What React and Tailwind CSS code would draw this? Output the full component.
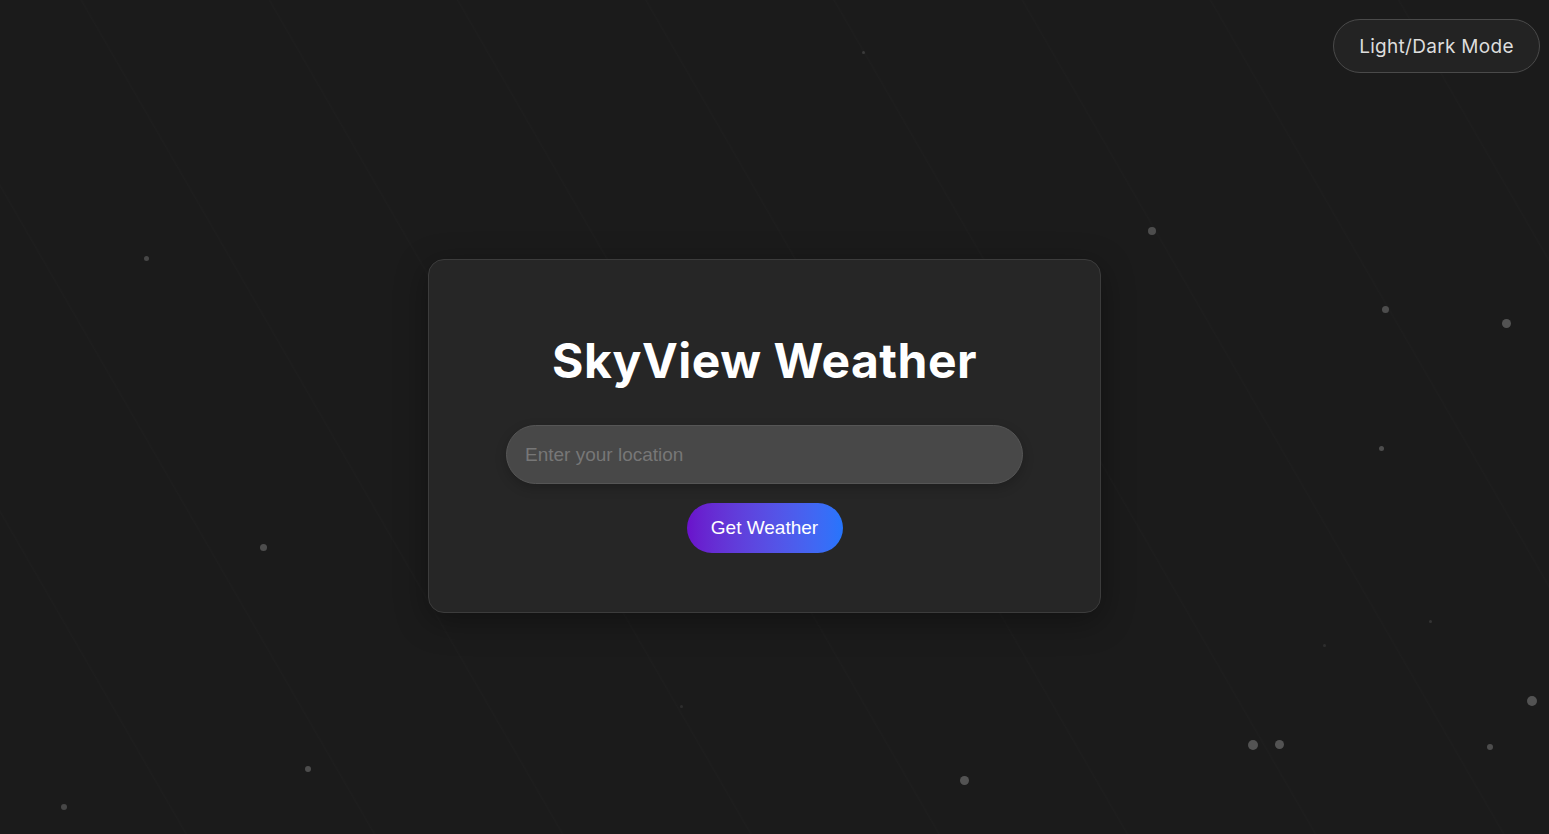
import React, { useState } from 'react';

// background dust: [x, y, size, opacity]
const stars = [
  [863, 52, 3, 0.5],
  [1152, 231, 8, 0.8],
  [146, 258, 5, 0.7],
  [1385, 309, 7, 0.8],
  [1506, 323, 9, 0.9],
  [1381, 448, 5, 0.8],
  [263, 547, 7, 0.8],
  [1430, 621, 3, 0.4],
  [1532, 701, 10, 0.9],
  [1253, 745, 10, 0.9],
  [1279, 744, 9, 0.9],
  [1490, 747, 6, 0.8],
  [308, 769, 6, 0.8],
  [964, 780, 9, 0.9],
  [64, 807, 6, 0.7],
  [681, 706, 3, 0.3],
  [1027, 498, 7, 0.15],
  [1324, 645, 3, 0.3],
];

const App = () => {
  const [location, setLocation] = useState('');

  return (
    <div className="relative min-h-screen overflow-hidden bg-[#1b1b1b] bg-[repeating-linear-gradient(60deg,transparent_0px,transparent_160px,rgba(255,255,255,0.012)_161px,transparent_163px)] font-['Liberation_Sans',Arial,sans-serif]">
      {stars.map(([x, y, s, o], i) => (
        <span
          key={i}
          className="absolute rounded-full bg-[#5a5a5a]"
          style={{ left: x - s / 2, top: y - s / 2, width: s, height: s, opacity: o }}
        />
      ))}

      <button className="absolute right-[9px] top-[19px] z-10 h-[54px] w-[207px] rounded-full border border-[#4a4a4a] bg-[#232323] pt-[2px] font-['Inter',sans-serif] text-[19px] tracking-[0.3px] text-[#dddddd]">
        Light/Dark Mode
      </button>

      <div className="relative flex min-h-screen items-center justify-center pr-[20px] pt-[38px]">
        <div className="flex h-[354px] w-[673px] flex-col items-center rounded-2xl border border-[#3c3c3c] bg-[#262626] px-[77px] pt-[72px] shadow-[0_8px_32px_rgba(0,0,0,0.35)]">
          <h1 className="font-['Inter',sans-serif] text-[48px] font-bold leading-[58px] tracking-[0.5px] text-white">
            SkyView Weather
          </h1>
          <input
            value={location}
            onChange={(e) => setLocation(e.target.value)}
            placeholder="Enter your location"
            className="mt-[35px] h-[59px] w-full rounded-full border border-[#565656] bg-[#484848] px-[18px] text-[19px] text-white shadow-[0_4px_12px_rgba(0,0,0,0.2)] outline-none placeholder:text-[#777777]"
          />
          <button className="mt-[19px] h-[50px] w-[156px] rounded-full bg-gradient-to-r from-[#6a11cb] to-[#2575fc] text-[19px] text-white">
            Get Weather
          </button>
        </div>
      </div>
    </div>
  );
};

export default App;
